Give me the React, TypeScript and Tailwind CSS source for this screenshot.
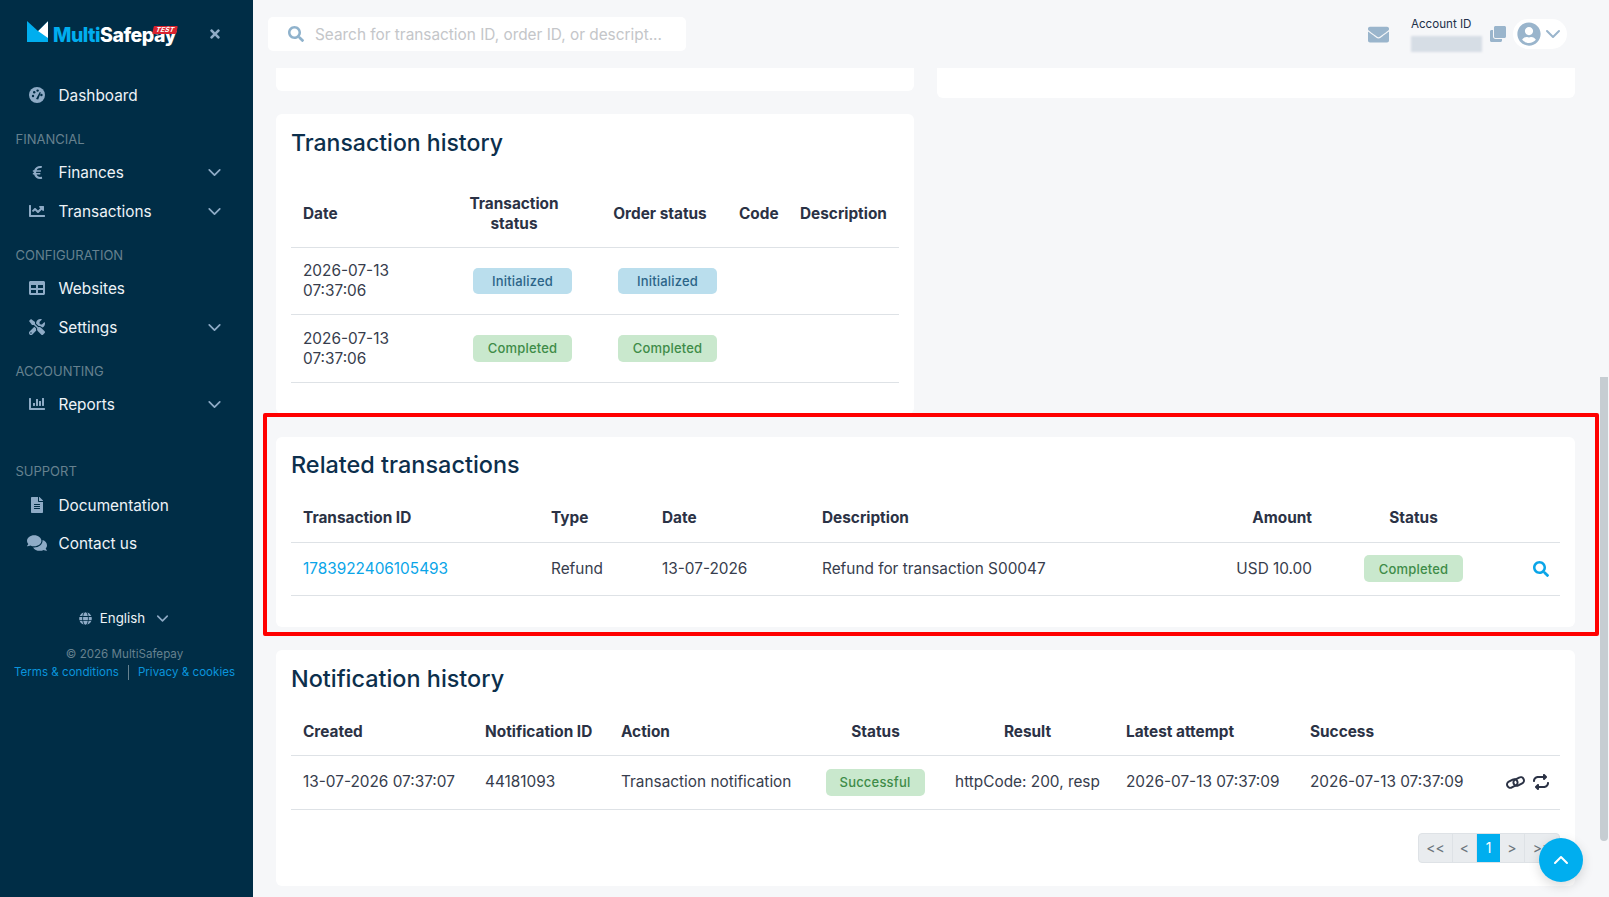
import type { ReactNode } from "react";
import { ChevronDown, ChevronUp } from "lucide-react";
import {
  FaEuroSign, FaChartLine, FaTable, FaTools, FaChartBar, FaFileAlt, FaComments,
  FaGlobe, FaEnvelope, FaClone, FaUserCircle, FaSearch, FaTimes,
} from "react-icons/fa";
import { FaRepeat } from "react-icons/fa6";

function Gauge() {
  return (
    <svg width="16" height="16" viewBox="0 0 16 16">
      <circle cx="8" cy="8" r="8" fill="currentColor" />
      <circle cx="4" cy="9" r="1.2" fill="#002d46" />
      <circle cx="5.2" cy="5.2" r="1.2" fill="#002d46" />
      <circle cx="8.6" cy="3.6" r="1.2" fill="#002d46" />
      <circle cx="12.4" cy="8" r="1.2" fill="#002d46" />
      <path d="M7 12 L10.8 5 L11.8 5.5 L9.2 12.4 Z" fill="#002d46" />
    </svg>
  );
}

function LinkIcon() {
  return (
    <svg width="19" height="15" viewBox="0 0 19 15" className="shrink-0" fill="none" stroke="currentColor" strokeWidth="2">
      <rect x="0.8" y="5.2" width="11" height="6.6" rx="3.3" transform="rotate(-28 6.3 8.5)" />
      <rect x="7.2" y="3.2" width="11" height="6.6" rx="3.3" transform="rotate(-28 12.7 6.5)" />
    </svg>
  );
}

function NavRow({ icon, label, chevron }: { icon: ReactNode; label: string; chevron?: boolean }) {
  return (
    <div className="flex h-[38px] items-center pl-[27px] pr-[28px] text-[15.36px] text-[#eef3f7]">
      <span className="flex w-[20px] justify-center text-[#8eabc6]">{icon}</span>
      <span className="ml-[11.5px] mt-[2px] flex-1">{label}</span>
      {chevron && <ChevronDown size={21} strokeWidth={2} className="text-[#8eabc6]" />}
    </div>
  );
}

function SectionLabel({ children, pad = "pt-[15px]", h = "h-[39px]" }: { children: string; pad?: string; h?: string }) {
  return <div className={`${h} ${pad} pl-[15.5px] text-[13px] leading-[20px] text-[#66818f]`}>{children}</div>;
}

function Sidebar() {
  return (
    <aside className="flex h-full w-[253px] shrink-0 flex-col bg-[#002d46]">
      <div className="flex h-[76px] shrink-0 items-start pl-[27px] pt-[21px]">
        <svg width="21" height="21" viewBox="0 0 21 21" className="shrink-0">
          <path d="M0 0 L21 0 L21 21 L0 21 Z" fill="#00aeef" />
          <path d="M21 0 L11 10 L21 17 Z" fill="#ffffff" />
          <path d="M0 0 L21 0 L11 10 Z" fill="#002d46" />
        </svg>
        <div className="relative ml-[5px] mt-[2px] text-[19.5px] font-extrabold leading-[24px] tracking-[-0.5px]">
          <span className="text-[#00aeef]">Multi</span>
          <span className="text-white">Safepay</span>
          <span className="absolute right-[-1px] top-[3px] -skew-x-12 rounded-[1px] bg-[#d9232e] px-[3px] text-[7px] font-bold italic leading-[8px] tracking-normal text-white">TEST</span>
        </div>
        <FaTimes size={14} className="ml-[32px] mt-[6px] text-[#8eabc6]" />
      </div>
      <NavRow icon={<Gauge />} label="Dashboard" />
      <SectionLabel>FINANCIAL</SectionLabel>
      <div className="flex flex-col gap-px">
        <NavRow icon={<FaEuroSign size={15} />} label="Finances" chevron />
        <NavRow icon={<FaChartLine size={16} />} label="Transactions" chevron />
      </div>
      <SectionLabel>CONFIGURATION</SectionLabel>
      <div className="flex flex-col gap-px">
        <NavRow icon={<FaTable size={16} />} label="Websites" />
        <NavRow icon={<FaTools size={16} />} label="Settings" chevron />
      </div>
      <SectionLabel>ACCOUNTING</SectionLabel>
      <NavRow icon={<FaChartBar size={16} />} label="Reports" chevron />
      <SectionLabel h="h-[63px]" pad="pt-[38px]">SUPPORT</SectionLabel>
      <div className="flex flex-col">
        <NavRow icon={<FaFileAlt size={16} />} label="Documentation" />
        <NavRow icon={<FaComments size={20} />} label="Contact us" />
      </div>
      <div className="mt-[46px] flex items-center justify-center pr-[2px] text-[13.3px] leading-[20px] text-[#eef3f7]">
        <FaGlobe size={13} className="text-[#8eabc6]" />
        <span className="ml-[8px]">English</span>
        <ChevronDown size={19} className="ml-[8px] text-[#8eabc6]" />
      </div>
      <div className="mt-[17px] pr-[4px] text-center text-[11.6px] leading-[18px] text-[#66818f]">© 2026 MultiSafepay</div>
      <div className="flex items-center justify-center pr-[4px] text-[11.6px] leading-[18px] text-[#0a94dc]">
        <span>Terms &amp; conditions</span>
        <span className="mx-[9px] h-[15px] w-px bg-[#66818f]" />
        <span>Privacy &amp; cookies</span>
      </div>
    </aside>
  );
}

function TopBar() {
  return (
    <header className="flex h-[68px] shrink-0 items-center pl-[15px] pr-[33px]">
      <div className="flex h-[34px] w-[418px] items-center rounded-[5px] bg-white pl-[20px]">
        <FaSearch size={16} className="text-[#8fb2cc]" />
        <span className="ml-[11px] mt-[1px] text-[15.36px] text-[#c4c6c9]">Search for transaction ID, order ID, or descript...</span>
      </div>
      <div className="ml-auto flex items-center">
        <FaEnvelope size={21} className="text-[#9ab5cc]" />
        <div className="ml-[22px] flex w-[71px] flex-col">
          <span className="text-[11.6px] leading-[16px] text-[#22304a]">Account ID</span>
          <span className="mt-[4px] h-[16px] w-[71px] bg-[#d6dde5] blur-[1px]" />
        </div>
        <FaClone size={16} className="ml-[8px] text-[#9ab5cc]" />
        <div className="ml-[7px] flex h-[30px] w-[54px] items-center rounded-full bg-white pl-[4px]">
          <FaUserCircle size={24} className="text-[#9ab5cc]" />
          <ChevronDown size={24} className="shrink-0 text-[#9ab5cc]" />
        </div>
      </div>
    </header>
  );
}

function Badge({ tone, children, className = "" }: { tone: "blue" | "green"; children: string; className?: string }) {
  const cls = tone === "blue" ? "bg-[#badeed] text-[#2b6488] h-[26px]" : "bg-[#c9e8cd] text-[#3e8c48] h-[27px]";
  return (
    <span className={`${cls} ${className} inline-flex w-[99px] items-center justify-center rounded-[5px] text-[13px] font-medium tracking-[0.2px]`}>
      {children}
    </span>
  );
}

const th = "border-b border-[#dee2e6] pt-[2px] align-middle text-[15.36px] font-bold leading-[20px] text-[#2b3245]";
const td = "border-b border-[#dee2e6] align-middle text-[15.36px] leading-[20px]";
const ink = "text-[#373d4d]";

function Card({ title, size = "text-[23.04px]", className = "", children }: { title: string; size?: string; className?: string; children: ReactNode }) {
  return (
    <section className={`rounded-[6px] bg-white px-[15px] ${className}`}>
      <h2 className={`${size} font-medium leading-[29px] text-[#0c2f4c]`}>{title}</h2>
      {children}
    </section>
  );
}

function HistoryTable() {
  const rows: { tone: "blue" | "green"; label: string; h: string }[] = [
    { tone: "blue", label: "Initialized", h: "h-[67px]" },
    { tone: "green", label: "Completed", h: "h-[68px] pt-[2px]" },
  ];
  return (
    <table className="mt-[22px] w-[608px] table-fixed">
      <colgroup>
        <col className="w-[137px]" />
        <col className="w-[172px]" />
        <col className="w-[120px]" />
        <col className="w-[68px]" />
        <col className="w-[111px]" />
      </colgroup>
      <thead>
        <tr>
          <th className={`${th} h-[67px] px-[12px] text-left`}>Date</th>
          <th className={`${th} text-center`}>Transaction<br />status</th>
          <th className={`${th} text-center`}>Order status</th>
          <th className={`${th} pl-[19px] text-left`}>Code</th>
          <th className={`${th} pl-[12px] text-left`}>Description</th>
        </tr>
      </thead>
      <tbody>
        {rows.map((r) => (
          <tr key={r.label}>
            <td className={`${td} ${ink} ${r.h} px-[12px]`}>2026-07-13<br />07:37:06</td>
            <td className={`${td} pl-[45px]`}><Badge tone={r.tone}>{r.label}</Badge></td>
            <td className={`${td} pl-[18px]`}><Badge tone={r.tone}>{r.label}</Badge></td>
            <td className={td}></td>
            <td className={td}></td>
          </tr>
        ))}
      </tbody>
    </table>
  );
}

function RelatedTable() {
  return (
    <table className="mt-[13px] w-full table-fixed">
      <colgroup>
        <col className="w-[248px]" />
        <col className="w-[111px]" />
        <col className="w-[160px]" />
        <col className="w-[390px]" />
        <col className="w-[124px]" />
        <col className="w-[179px]" />
        <col className="w-[57px]" />
      </colgroup>
      <thead>
        <tr>
          <th className={`${th} h-[50px] px-[12px] text-left`}>Transaction ID</th>
          <th className={`${th} px-[12px] text-left`}>Type</th>
          <th className={`${th} px-[12px] text-left`}>Date</th>
          <th className={`${th} px-[12px] text-left`}>Description</th>
          <th className={`${th} pl-[12px] pr-[12px] text-right`}>Amount</th>
          <th className={`${th} text-center`}>Status</th>
          <th className={th}></th>
        </tr>
      </thead>
      <tbody>
        <tr>
          <td className={`${td} h-[53px] px-[12px] text-[#0aa5e8]`}>1783922406105493</td>
          <td className={`${td} ${ink} px-[12px]`}>Refund</td>
          <td className={`${td} ${ink} px-[12px]`}>13-07-2026</td>
          <td className={`${td} ${ink} px-[12px]`}>Refund for transaction S00047</td>
          <td className={`${td} ${ink} pl-[12px] pr-[12px] text-right`}>USD 10.00</td>
          <td className={`${td} text-center`}><Badge tone="green">Completed</Badge></td>
          <td className={td}>
            <div className="flex justify-end pr-[11px]"><FaSearch size={16} className="text-[#0aa5e8]" /></div>
          </td>
        </tr>
      </tbody>
    </table>
  );
}

function NotificationTable() {
  return (
    <table className="mt-[14px] w-full table-fixed">
      <colgroup>
        <col className="w-[182px]" />
        <col className="w-[136px]" />
        <col className="w-[200px]" />
        <col className="w-[132px]" />
        <col className="w-[173px]" />
        <col className="w-[184px]" />
        <col className="w-[194px]" />
        <col className="w-[68px]" />
      </colgroup>
      <thead>
        <tr>
          <th className={`${th} h-[48px] px-[12px] text-left`}>Created</th>
          <th className={`${th} px-[12px] text-left`}>Notification ID</th>
          <th className={`${th} px-[12px] text-left`}>Action</th>
          <th className={`${th} pl-[1px] text-center`}>Status</th>
          <th className={`${th} text-center`}>Result</th>
          <th className={`${th} px-[12px] text-left`}>Latest attempt</th>
          <th className={`${th} px-[12px] text-left`}>Success</th>
          <th className={th}></th>
        </tr>
      </thead>
      <tbody>
        <tr>
          <td className={`${td} ${ink} h-[54px] px-[12px]`}>13-07-2026 07:37:07</td>
          <td className={`${td} ${ink} px-[12px]`}>44181093</td>
          <td className={`${td} ${ink} px-[12px]`}>Transaction notification</td>
          <td className={`${td} text-center`}><Badge tone="green">Successful</Badge></td>
          <td className={`${td} ${ink} text-center`}>httpCode: 200, resp</td>
          <td className={`${td} ${ink} px-[12px]`}>2026-07-13 07:37:09</td>
          <td className={`${td} ${ink} px-[12px]`}>2026-07-13 07:37:09</td>
          <td className={td}>
            <div className="flex items-center justify-end gap-[8px] pr-[11px] text-[#2b3245]">
              <LinkIcon />
              <FaRepeat size={16} className="shrink-0" />
            </div>
          </td>
        </tr>
      </tbody>
    </table>
  );
}

function Page() {
  return (
    <div className="flex flex-col pl-[23px] pr-[25px]">
      <div className="flex gap-[23px]">
        <div className="flex w-[638px] flex-col gap-[23px]">
          <div className="h-[23px] rounded-b-[6px] bg-white" />
          <Card title="Transaction history" className="h-[300px] pt-[15px]">
            <HistoryTable />
          </Card>
        </div>
        <div className="h-[30px] w-[638px] rounded-b-[6px] bg-white" />
      </div>
      <Card title="Related transactions" size="text-[23.45px]" className="mt-[23px] h-[190px] pt-[13px]">
        <RelatedTable />
      </Card>
      <Card title="Notification history" size="text-[23.4px]" className="mt-[23px] h-[236px] pt-[14px]">
        <NotificationTable />
        <div className="mt-[23px] flex justify-end">
          <div className="flex h-[30px] overflow-hidden rounded-[4px] border border-[#dee2e6] bg-[#e9ecef] text-[14px] leading-[28px] text-[#6c757d]">
            <span className="w-[34px] border-r border-[#dee2e6] text-center">&lt;&lt;</span>
            <span className="w-[24px] border-r border-[#dee2e6] text-center">&lt;</span>
            <span className="w-[23px] bg-[#00aeef] text-center text-white">1</span>
            <span className="w-[25px] border-r border-[#dee2e6] text-center">&gt;</span>
            <span className="w-[34px] text-center">&gt;&gt;</span>
          </div>
        </div>
      </Card>
    </div>
  );
}

export default function App() {
  return (
    <div className="relative flex h-[897px] w-[1609px] overflow-hidden bg-[#f6f7f9] font-['Inter','Liberation_Sans',sans-serif]">
      <Sidebar />
      <main className="flex min-w-0 flex-1 flex-col">
        <TopBar />
        <Page />
      </main>
      <div className="w-[9px] shrink-0">
        <div className="mt-[377px] h-[464px] w-[8px] rounded-b-[4px] bg-[#c6cdd2]" />
      </div>
      <div className="pointer-events-none absolute left-[263px] top-[413px] h-[223px] w-[1336px] rounded-[2px] border-[4px] border-[#ff0000]" />
      <div className="absolute left-[1539px] top-[838px] flex h-[44px] w-[44px] items-center justify-center rounded-full bg-[#00aeef] text-white shadow-[0_4px_12px_rgba(0,0,0,0.15)]">
        <ChevronUp size={24} strokeWidth={2} />
      </div>
    </div>
  );
}
